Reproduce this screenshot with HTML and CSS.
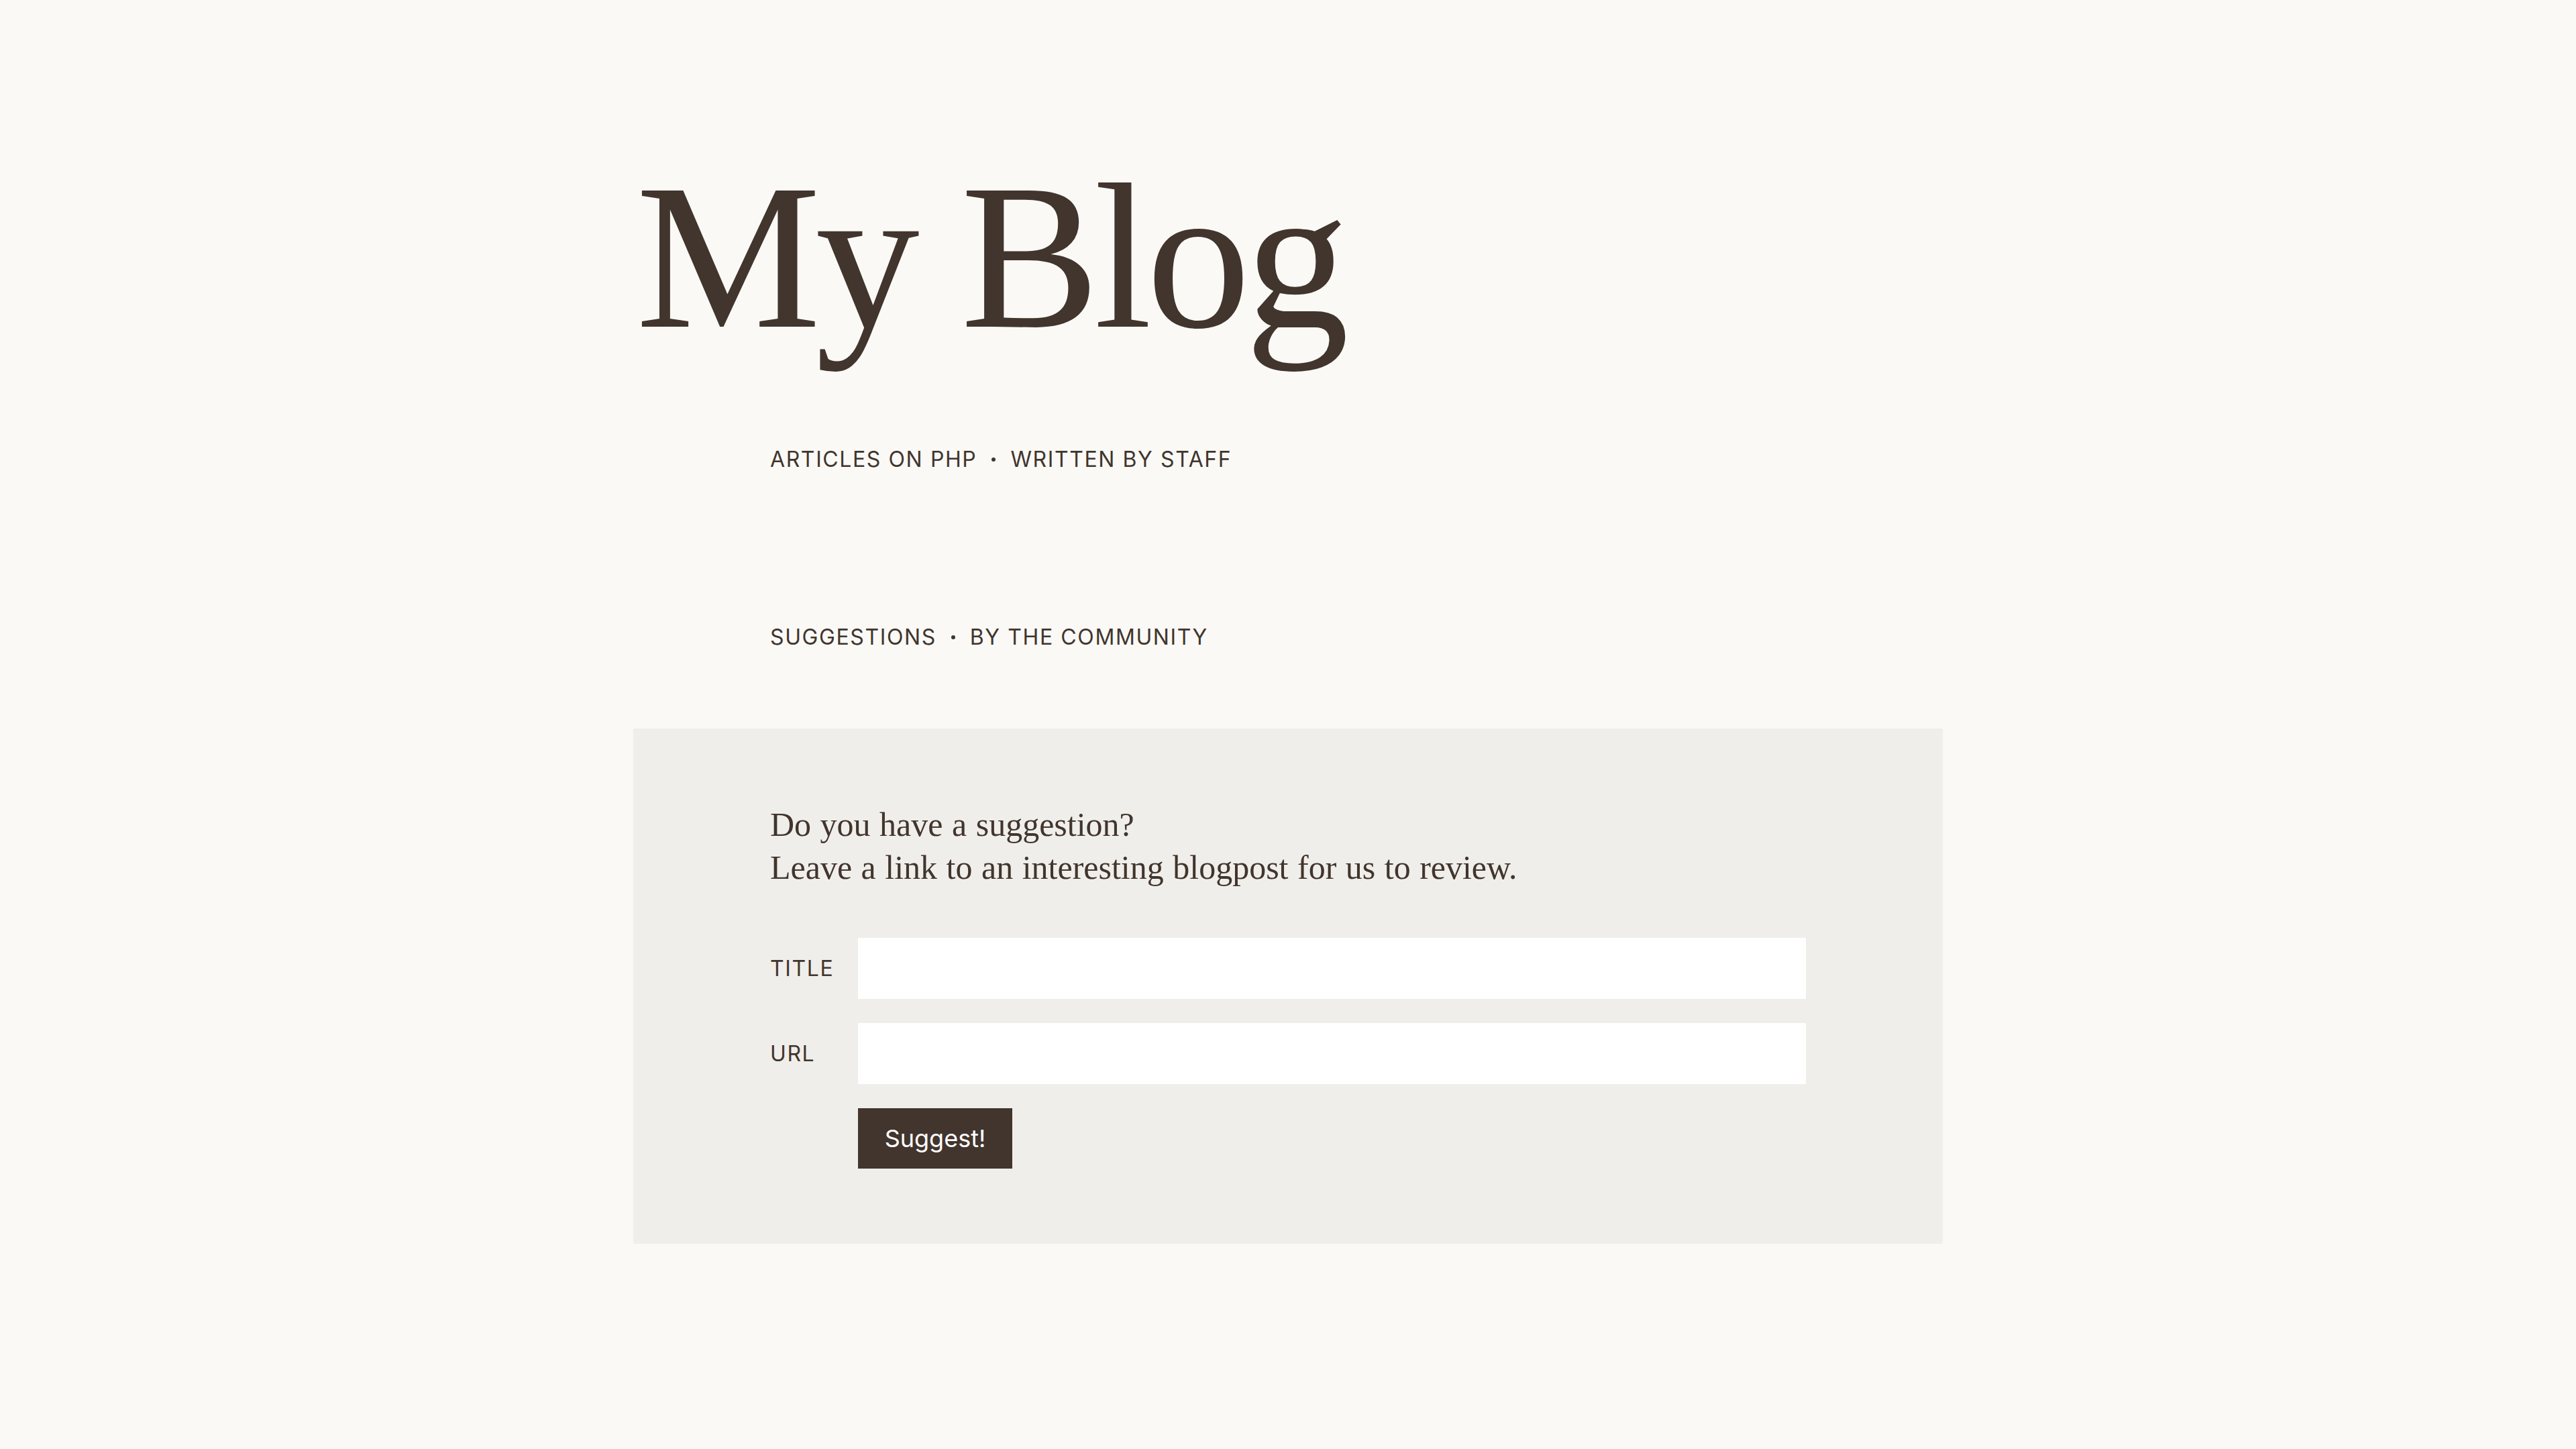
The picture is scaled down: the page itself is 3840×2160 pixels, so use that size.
FILE: index.html
```html
<!DOCTYPE html>
<html lang="en">
<head>
<meta charset="utf-8">
<title>My Blog</title>
<link rel="stylesheet" href="styles.css">
</head>
<body>
<main class="page">
  <h1 class="title">My Blog</h1>
  <p class="meta meta-articles">Articles on PHP<span class="dot"></span>Written by staff</p>
  <p class="meta meta-suggest">Suggestions<span class="dot"></span>By the community</p>
  <section class="box">
    <p class="intro">Do you have a suggestion?<br>Leave a link to an interesting blogpost for us to review.</p>
    <form class="form">
      <label class="label" for="title">Title</label>
      <input class="input" id="title" type="text">
      <label class="label" for="url">URL</label>
      <input class="input" id="url" type="text">
      <span></span>
      <div class="actions"><button class="button" type="button">Suggest!</button></div>
    </form>
  </section>
</main>
</body>
</html>
```
FILE: styles.css
```css
html, body {
  margin: 0;
  padding: 0;
}
body {
  background: #faf9f6;
  color: #41352d;
  font-family: Inter, "Liberation Sans", sans-serif;
}
.page {
  width: 1952px;
  margin: 0 auto;
  padding: 228px 0 736px;
}
.title {
  margin: 0;
  font-family: "Liberation Serif", serif;
  font-weight: normal;
  font-size: 310px;
  line-height: 1;
  letter-spacing: -8px;
  padding-left: 4px;
}
.meta {
  margin: 0;
  padding-left: 204px;
  font-size: 32px;
  line-height: 40px;
  text-transform: uppercase;
  letter-spacing: 0.05em;
  display: flex;
  align-items: center;
}
.meta-articles {
  margin-top: 127px;
}
.meta-suggest {
  margin-top: 225px;
}
.dot {
  width: 6px;
  height: 6px;
  border-radius: 50%;
  background: #41352d;
  margin: 0 22px 0 22px;
  flex: none;
}
.box {
  margin-top: 116px;
  background: #f0eeea;
  padding: 111px 204px 112px;
}
.intro {
  margin: 0;
  font-family: "Liberation Serif", serif;
  font-size: 50px;
  line-height: 64px;
  word-spacing: 1px;
}
.form {
  margin-top: 73px;
  display: grid;
  grid-template-columns: 131px 1fr;
  row-gap: 36px;
  align-items: center;
}
.label {
  font-size: 32px;
  letter-spacing: 0.05em;
  text-transform: uppercase;
}
.input {
  height: 91px;
  box-sizing: border-box;
  border: 0;
  background: #ffffff;
  margin: 0;
  padding: 0 20px;
  font: inherit;
  font-size: 32px;
  outline: none;
}
.actions {
  display: flex;
}
.button {
  height: 90px;
  width: 230px;
  border: 0;
  margin: 0;
  padding: 0;
  background: #42352d;
  color: #ffffff;
  font-family: Inter, "Liberation Sans", sans-serif;
  font-size: 36px;
  cursor: pointer;
}
```
